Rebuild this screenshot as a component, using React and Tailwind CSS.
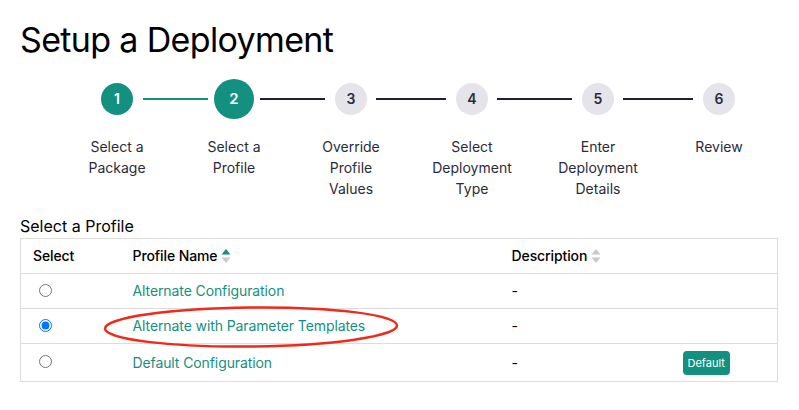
import React from "react";

const TEAL = "bg-[#13907f]";

const steps = [
  { n: 1, label: ["Select a", "Package"], state: "done" },
  { n: 2, label: ["Select a", "Profile"], state: "active" },
  { n: 3, label: ["Override", "Profile", "Values"], state: "todo" },
  { n: 4, label: ["Select", "Deployment", "Type"], state: "todo" },
  { n: 5, label: ["Enter", "Deployment", "Details"], state: "todo" },
  { n: 6, label: ["Review"], state: "todo" },
];

const profiles = [
  { name: "Alternate Configuration", desc: "-", checked: false },
  { name: "Alternate with Parameter Templates", desc: "-", checked: true },
  { name: "Default Configuration", desc: "-", checked: false, isDefault: true },
];

const StepCircle = ({ step }) => {
  if (step.state === "active") {
    return (
      <div className={`w-10 h-10 rounded-full ${TEAL} text-white flex items-center justify-center text-[15px] font-semibold`}>
        {step.n}
      </div>
    );
  }
  if (step.state === "done") {
    return (
      <div className={`w-8 h-8 rounded-full ${TEAL} text-white flex items-center justify-center text-sm font-semibold`}>
        {step.n}
      </div>
    );
  }
  return (
    <div className="w-8 h-8 rounded-full bg-[#e4e4ea] text-[#2b2b3b] flex items-center justify-center text-sm font-semibold">
      {step.n}
    </div>
  );
};

const SortIcon = ({ active }) => (
  <svg width="10" height="16" viewBox="0 0 10 16" className="ml-1">
    <path d="M5 1 L9.5 6.5 L0.5 6.5 Z" fill={active ? "#13907f" : "#c9c9cf"} />
    <path d="M5 15 L9.5 9.5 L0.5 9.5 Z" fill="#c9c9cf" />
  </svg>
);

export default function App() {
  return (
    <div
      className="w-[799px] h-[410px] bg-white px-5 overflow-hidden"
      style={{ fontFamily: "Inter, 'Noto Sans', sans-serif" }}
    >
      <h1 className="pt-[19px] text-[34px] leading-[41px] text-black font-normal tracking-[-0.65px]">
        Setup a Deployment
      </h1>

      {/* stepper circles + connectors */}
      <div className="mt-[19px] h-10 flex items-center pl-[81px]">
        <StepCircle step={steps[0]} />
        <div className="ml-[10px] w-[65px] h-[2px] bg-[#13907f]" />
        <div className="ml-[6px]">
          <StepCircle step={steps[1]} />
        </div>
        <div className="ml-[6px] w-[65px] h-[2px] bg-[#1f2033]" />
        <div className="ml-[10px]">
          <StepCircle step={steps[2]} />
        </div>
        <div className="ml-[9px] w-[70px] h-[2px] bg-[#1f2033]" />
        <div className="ml-[10px]">
          <StepCircle step={steps[3]} />
        </div>
        <div className="ml-[9px] w-[75px] h-[2px] bg-[#1f2033]" />
        <div className="ml-[10px]">
          <StepCircle step={steps[4]} />
        </div>
        <div className="ml-[9px] w-[70px] h-[2px] bg-[#1f2033]" />
        <div className="ml-[10px]">
          <StepCircle step={steps[5]} />
        </div>
      </div>

      {/* step labels */}
      <div className="mt-[17px] flex pl-[47px] text-sm leading-[21px] text-[#2b2b3b]">
        <div className="w-[100px] text-center">{steps[0].label.map((l) => <div key={l}>{l}</div>)}</div>
        <div className="ml-[17px] w-[100px] text-center">{steps[1].label.map((l) => <div key={l}>{l}</div>)}</div>
        <div className="ml-[17px] w-[100px] text-center">{steps[2].label.map((l) => <div key={l}>{l}</div>)}</div>
        <div className="ml-[21px] w-[100px] text-center">{steps[3].label.map((l) => <div key={l}>{l}</div>)}</div>
        <div className="ml-[26px] w-[100px] text-center">{steps[4].label.map((l) => <div key={l}>{l}</div>)}</div>
        <div className="ml-[21px] w-[100px] text-center">{steps[5].label.map((l) => <div key={l}>{l}</div>)}</div>
      </div>

      <h2 className="mt-[15px] text-base leading-6 text-black">Select a Profile</h2>

      {/* profiles table */}
      <div className="relative">
        <table className="w-[757px] table-fixed border-collapse text-sm tracking-[-0.1px]">
          <colgroup>
            <col className="w-[100px]" />
            <col className="w-[379px]" />
            <col className="w-[171px]" />
            <col className="w-[107px]" />
          </colgroup>
          <thead>
            <tr className="h-[35px] border border-[#dcdcdc]">
              <th className="px-3 text-left font-medium text-black">Select</th>
              <th className="px-3 text-left font-medium text-black">
                <span className="inline-flex items-center">
                  Profile Name <SortIcon active />
                </span>
              </th>
              <th className="px-3 text-left font-medium text-black">
                <span className="inline-flex items-center">
                  Description <SortIcon />
                </span>
              </th>
              <th className="px-3" />
            </tr>
          </thead>
          <tbody>
            {profiles.map((p) => (
              <tr
                key={p.name}
                className={`border border-[#dcdcdc] ${p.isDefault ? "h-[38px]" : "h-[35px]"}`}
              >
                <td className="pl-[18px]">
                  <input
                    type="radio"
                    name="profile"
                    defaultChecked={p.checked}
                    className="w-[13px] h-[13px] align-middle -mt-1"
                  />
                </td>
                <td className="px-3 text-[#13907f]">{p.name}</td>
                <td className="px-3 text-black">{p.desc}</td>
                <td className="px-3">
                  {p.isDefault && (
                    <span className={`inline-block ${TEAL} text-white text-[11px] tracking-normal leading-6 px-[5px] rounded`}>
                      Default
                    </span>
                  )}
                </td>
              </tr>
            ))}
          </tbody>
        </table>

        {/* red annotation ellipse */}
        <svg
          className="absolute left-[82px] top-[66px] pointer-events-none"
          width="298"
          height="46"
          viewBox="0 0 298 46"
        >
          <ellipse
            cx="149"
            cy="23"
            rx="146"
            ry="19.5"
            fill="none"
            stroke="#f02a1a"
            strokeWidth="2.5"
            transform="rotate(-0.6 149 23)"
          />
        </svg>
      </div>
    </div>
  );
}
